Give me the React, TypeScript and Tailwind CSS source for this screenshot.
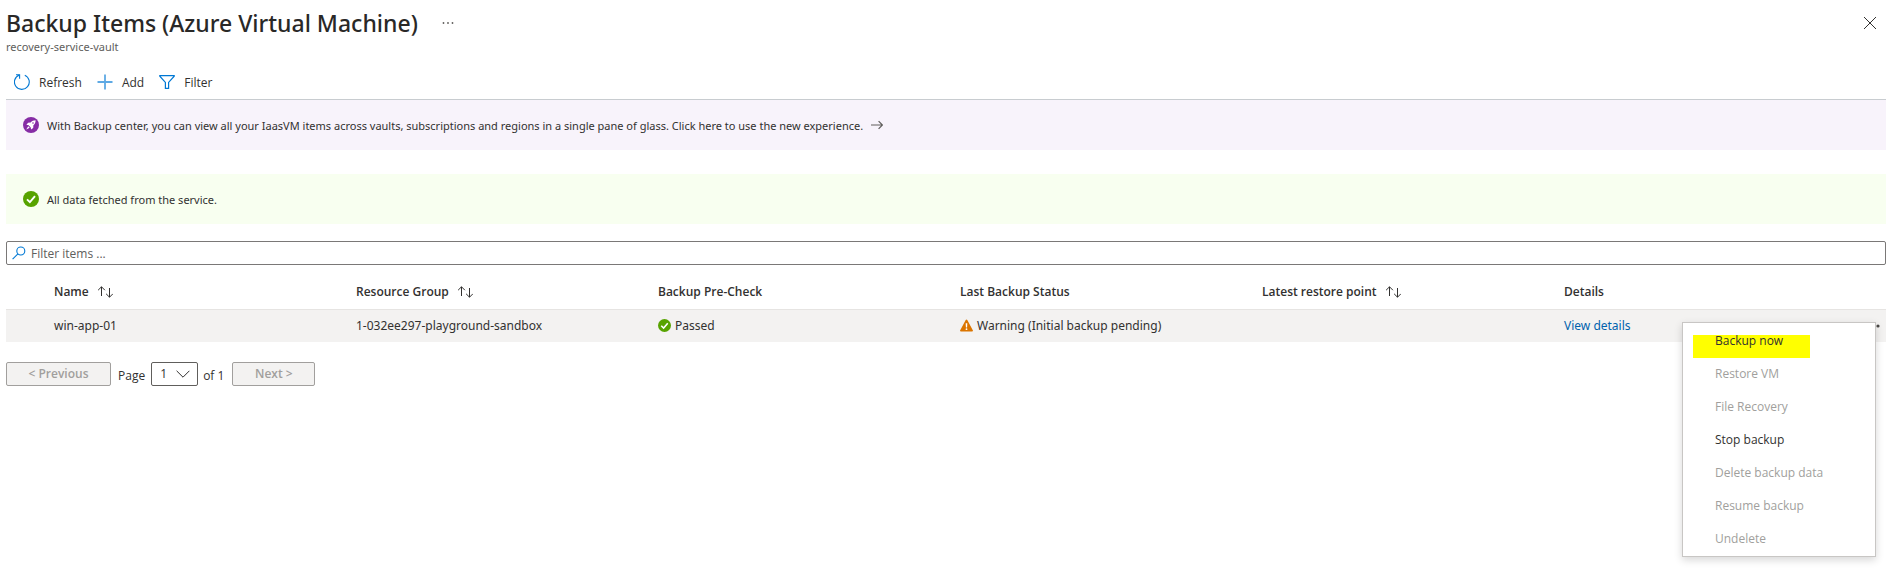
import type { ReactNode } from "react";

function RefreshIcon() {
  return (
    <svg className="size-4" viewBox="0 0 16 16" fill="none" stroke="#0078d4" strokeWidth="1.1" aria-hidden="true">
      <path d="M10.8 1.2A7.4 7.4 0 1 1 5.4 1" />
      <path d="M2 .7h3.6v4" />
    </svg>
  );
}

function PlusIcon() {
  return (
    <svg className="size-4" viewBox="0 0 16 16" fill="none" stroke="#5ea9e4" strokeWidth="1.8" aria-hidden="true">
      <path d="M8 .5v15M.5 8h15" />
    </svg>
  );
}

function FunnelIcon() {
  return (
    <svg className="size-4" viewBox="0 0 16 16" fill="none" stroke="#0078d4" strokeWidth="1.2" aria-hidden="true">
      <path d="M.8 1.6h14.4v.6L9.6 8.4v6H6.4v-6L.8 2.2z" />
    </svg>
  );
}

function RocketIcon() {
  return (
    <svg className="size-4 shrink-0" viewBox="0 0 16 16" aria-hidden="true">
      <circle cx="8" cy="8" r="8" fill="#862ca5" />
      <path d="M12.6 3.3c-2 0-3.7.7-5 2.2L5 5.8 3.4 7.9l1.9.2 2.5 2.5.2 2 2.2-1.7.2-2.6c1.6-1.3 2.2-3 2.2-5z" fill="#fff" />
      <path d="M5.2 9.3 3.3 12.6l3.4-1.8z" fill="#fff" />
      <circle cx="10" cy="6" r=".8" fill="#862ca5" />
    </svg>
  );
}

function CheckIcon({ className }: { className: string }) {
  return (
    <svg className={className} viewBox="0 0 16 16" aria-hidden="true">
      <circle cx="8" cy="8" r="8" fill="#57a300" />
      <path d="m4 8.3 2.9 2.9L12 5.2" fill="none" stroke="#fff" strokeWidth="1.9" />
    </svg>
  );
}

function WarningIcon() {
  return (
    <svg className="size-[13px] shrink-0" viewBox="0 0 13 13" aria-hidden="true">
      <path d="M5.7.9a.9.9 0 0 1 1.6 0l5.500 10.300a.9.9 0 0 1-.8 1.300H1a.9.9 0 0 1-.8-1.300z" fill="#db7500" />
      <path d="M5.7 4.2h1.6L7.1 8.6H5.9z" fill="#fff" />
      <circle cx="6.5" cy="10.2" r=".9" fill="#fff" />
    </svg>
  );
}

function SortIcon() {
  return (
    <svg className="h-3 w-4" viewBox="0 0 16 12" fill="none" stroke="#323130" strokeWidth="1" aria-hidden="true">
      <path d="M4.5 10V.8M1.100 4.200 4.500.8l3.400 3.400" />
      <path d="M12.500 2v9.200M9.100 7.800l3.400 3.400 3.400-3.400" />
    </svg>
  );
}

function ToolButton({ icon, children }: { icon: ReactNode; children: ReactNode }) {
  return (
    <button type="button" className="flex items-start gap-[9px]">
      {icon}
      <span className="pt-px">{children}</span>
    </button>
  );
}

const columns = [
  { label: "Name", sortable: true },
  { label: "Resource Group", sortable: true },
  { label: "Backup Pre-Check", sortable: false },
  { label: "Last Backup Status", sortable: false },
  { label: "Latest restore point", sortable: true },
  { label: "Details", sortable: false },
];

const menuItems = [
  { label: "Restore VM", enabled: false },
  { label: "File Recovery", enabled: false },
  { label: "Stop backup", enabled: true },
  { label: "Delete backup data", enabled: false },
  { label: "Resume backup", enabled: false },
  { label: "Undelete", enabled: false },
];

function ContextMenu() {
  return (
    <div
      role="menu"
      className="absolute top-3 right-2.5 z-10 w-[194px] border border-[#c8c6c4] bg-white pt-0.5 font-['Open_Sans','Segoe_UI',sans-serif] text-[#323130] shadow-[0_3px_8px_rgba(0,0,0,0.16)]"
    >
      <button type="button" role="menuitem" className="relative block h-[33px] w-full px-8 text-left">
        <span className="absolute top-2.5 left-2.5 h-[23px] w-[117px] bg-[#ffff00]" />
        <span className="relative">Backup now</span>
      </button>
      {menuItems.map((item) => (
        <button
          key={item.label}
          type="button"
          role="menuitem"
          disabled={!item.enabled}
          className="block h-[33px] w-full px-8 text-left disabled:text-[#a19f9d]"
        >
          {item.label}
        </button>
      ))}
    </div>
  );
}

export default function App() {
  return (
    <main className="min-h-screen bg-white pr-2.5 pl-1.5 font-['Open_Sans','Segoe_UI',sans-serif] text-[12px] leading-4 text-[#323130]">
      <header className="flex items-start justify-between pt-2">
        <div>
          <div className="flex items-center gap-[22px]">
            <h1 className="font-['Noto_Sans',sans-serif] text-[23px] leading-[30px] font-medium text-[#292827]">
              Backup Items (Azure Virtual Machine)
            </h1>
            <button type="button" aria-label="More" className="flex w-4 justify-center">
              <svg className="h-1 w-3" viewBox="0 0 12 4" fill="#605e5c" aria-hidden="true">
                <circle cx="1.5" cy="2" r=".9" />
                <circle cx="6" cy="2" r=".9" />
                <circle cx="10.5" cy="2" r=".9" />
              </svg>
            </button>
          </div>
          <p className="font-['Noto_Sans',sans-serif] text-[11px] leading-[18px] text-[#605e5c]">
            recovery-service-vault
          </p>
        </div>
        <button type="button" aria-label="Close" className="mt-2 mr-[9px]">
          <svg className="size-3.5" viewBox="0 0 14 14" fill="none" stroke="#323130" strokeWidth="1" aria-hidden="true">
            <path d="m1 1 12 12M13 1 1 13" />
          </svg>
        </button>
      </header>

      <div className="flex h-11 items-end gap-[15px] border-b border-[#c8ccd0] px-2 pb-2">
        <ToolButton icon={<RefreshIcon />}>Refresh</ToolButton>
        <ToolButton icon={<PlusIcon />}>Add</ToolButton>
        <ToolButton icon={<FunnelIcon />}>Filter</ToolButton>
      </div>

      <a
        href="#backup-center"
        className="flex h-[50px] items-center gap-2 bg-[#f8f3fb] px-[17px] font-['Noto_Sans',sans-serif] text-[11px]"
      >
        <RocketIcon />
        <span className="pt-px">
          With Backup center, you can view all your IaasVM items across vaults, subscriptions and regions in a single
          pane of glass. Click here to use the new experience.
        </span>
        <svg className="h-2.5 w-3" viewBox="0 0 12 10" fill="none" stroke="#605e5c" strokeWidth="1.2" aria-hidden="true">
          <path d="M0 5h11.4M7.6 1.2 11.4 5 7.6 8.8" />
        </svg>
      </a>

      <div
        role="status"
        className="mt-6 flex h-[50px] items-center gap-2 bg-[#f8fff0] px-[17px] font-['Noto_Sans',sans-serif] text-[11px]"
      >
        <CheckIcon className="size-4 shrink-0" />
        <span className="pt-px">All data fetched from the service.</span>
      </div>

      <label className="mt-[17px] flex h-6 items-center gap-[5px] rounded-xs border border-[#7a7877] px-[5px]">
        <svg className="size-3.5" viewBox="0 0 14 14" fill="none" stroke="#0078d4" strokeWidth="1.1" aria-hidden="true">
          <circle cx="8.8" cy="5" r="4" />
          <path d="M5.9 7.9.6 13.2" />
        </svg>
        <input
          type="text"
          aria-label="Filter items"
          placeholder="Filter items ..."
          className="min-w-0 flex-1 pt-px outline-none placeholder:text-[#605e5c]"
        />
      </label>

      <div className="mt-2.5 pb-5">
        <table className="w-full table-fixed text-left">
          <thead>
            <tr className="h-[34px] border-b border-[#e6e4e2]">
              <th className="w-[38px]" />
              {columns.map((column) => (
                <th key={column.label} className="px-2.5 font-semibold" scope="col">
                  <span className="flex items-center gap-2">
                    {column.label}
                    {column.sortable && <SortIcon />}
                  </span>
                </th>
              ))}
              <th className="w-[30px]" />
            </tr>
          </thead>
          <tbody className="font-['Noto_Sans',sans-serif]">
            <tr className="h-[33px] bg-[#f3f2f1]">
              <td />
              <td className="px-2.5">win-app-01</td>
              <td className="px-2.5">1-032ee297-playground-sandbox</td>
              <td className="px-2.5">
                <span className="flex items-center gap-1">
                  <CheckIcon className="size-[13px] shrink-0" />
                  Passed
                </span>
              </td>
              <td className="px-2.5">
                <span className="flex items-center gap-1">
                  <WarningIcon />
                  Warning (Initial backup pending)
                </span>
              </td>
              <td />
              <td className="px-2.5">
                <a href="#details" className="text-[#0062ad]">
                  View details
                </a>
              </td>
              <td className="relative">
                <button type="button" aria-label="Row actions" className="ml-auto block pr-1.5">
                  <svg className="h-1 w-4" viewBox="0 0 16 4" fill="#4a4846" aria-hidden="true">
                    <circle cx="2" cy="2" r="1.6" />
                    <circle cx="8" cy="2" r="1.6" />
                    <circle cx="14" cy="2" r="1.6" />
                  </svg>
                </button>
                <ContextMenu />
              </td>
            </tr>
          </tbody>
        </table>
      </div>

      <nav aria-label="Pagination" className="flex items-center">
        <button
          type="button"
          disabled
          className="h-6 w-[105px] rounded-xs border border-[#a19f9d] bg-[#f3f2f1] font-semibold text-[#a19f9d]"
        >
          &lt; Previous
        </button>
        <label className="ml-[7px] flex items-center gap-1.5">
          <span className="pt-[3px]">Page</span>
          <span className="relative">
            <select
              defaultValue="1"
              className="h-6 w-[47px] appearance-none rounded-xs border border-[#605e5c] bg-white pl-2 outline-none"
            >
              <option value="1">1</option>
            </select>
            <svg
              className="pointer-events-none absolute top-2 right-2 h-2 w-3.5"
              viewBox="0 0 14 8"
              fill="none"
              stroke="#323130"
              aria-hidden="true"
            >
              <path d="m.6.8 6.400 6.400L13.400.8" />
            </svg>
          </span>
        </label>
        <span className="ml-[5px] pt-[3px]">of 1</span>
        <button
          type="button"
          disabled
          className="ml-2 h-6 w-[83px] rounded-xs border border-[#a19f9d] bg-[#f3f2f1] font-semibold text-[#a19f9d]"
        >
          Next &gt;
        </button>
      </nav>
    </main>
  );
}
